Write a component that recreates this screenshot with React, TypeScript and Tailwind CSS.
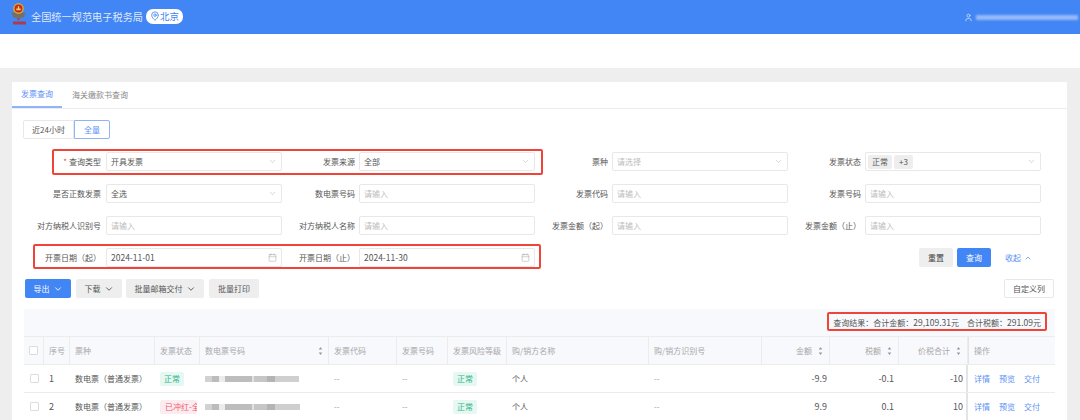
import React from 'react';
import { ChevronDown, ChevronUp, Calendar, MapPin, User } from 'lucide-react';

const font = "font-['Noto_Sans_CJK_SC','Noto_Sans',sans-serif]";

const Logo = () => (
  <svg width="20" height="26" viewBox="0 0 20 26" className="-mt-[4px]">
    <path d="M1.5 10.5 Q8.5 12 15.5 10.5 L14 15 Q8.5 17.5 3 15 Z" fill="#77705f" />
    <circle cx="8.5" cy="6.5" r="5.4" fill="#d9a72c" />
    <circle cx="8.5" cy="6.5" r="3.9" fill="#c8281e" />
    <path d="M6.3 6.4h4.4v1.8H6.3z M7.8 4.2h1.4v2.2H7.8z" fill="#efd06a" />
    <path d="M7 16.5 h3 l-1.5 2z" fill="#c8281e" />
    <rect x="3" y="19.4" width="13" height="3" rx="0.6" fill="#c8281e" opacity="0.8" />
  </svg>
);

const Caret = () => (
  <ChevronDown size={9} strokeWidth={1.5} className="text-[#b5b5b5] shrink-0" />
);

const Field = ({ label, children, req, first }: { label: string; children: React.ReactNode; req?: boolean; first?: boolean }) => (
  <div className="flex items-center h-[19px]">
    <div className={`${first ? 'w-[80px] pr-[5px]' : 'w-[77px] pr-[4px]'} text-right text-[8px] text-[#555] whitespace-nowrap shrink-0`}>
      {req && <span className="text-[#ef4444] mr-[2px]">*</span>}
      {label}
    </div>
    <div className="flex-1 h-full bg-white border border-[#e8e8e8] rounded-[2px] px-[4px] flex items-center justify-between text-[8px] min-w-0">
      {children}
    </div>
  </div>
);

const Value = ({ text }: { text: string }) => <span className="text-[#555]">{text}</span>;
const Hint = ({ text }: { text: string }) => <span className="text-[#bdbdbd]">{text}</span>;

const Sort = () => (
  <svg width="5" height="10" viewBox="0 0 5 10" className="shrink-0">
    <path d="M2.5 1 L4.3 3.4 H0.7 Z M2.5 9 L4.3 6.6 H0.7 Z" fill="#9a9a9a" />
  </svg>
);

const Tag = ({ red }: { red?: boolean }) =>
  red ? (
    <span className="w-[37px] h-[14px] overflow-hidden flex items-center pl-[5px] rounded-[2px] bg-[#fdecef] text-[#ef5a6f] text-[8px] whitespace-nowrap">
      已冲红-全额
    </span>
  ) : (
    <span className="w-[24px] h-[14px] flex items-center justify-center rounded-[2px] bg-[#e6f8f1] text-[#2db487] text-[8px]">
      正常
    </span>
  );

const gridCols = 'grid grid-cols-[20px_26px_85px_45px_129px_68px_51px_59px_142px_113px_68px_69px_69px_87px]';

const heads: { t: string; right?: boolean; sort?: boolean }[] = [
  { t: '序号' },
  { t: '票种' },
  { t: '发票状态' },
  { t: '数电票号码', sort: true },
  { t: '发票代码' },
  { t: '发票号码' },
  { t: '发票风险等级' },
  { t: '购/销方名称' },
  { t: '购/销方识别号' },
  { t: '金额', right: true, sort: true },
  { t: '税额', right: true, sort: true },
  { t: '价税合计', right: true, sort: true },
];

const Check = () => <span className="w-[9px] h-[9px] bg-white border border-[#dcdcdc] rounded-[1px] block" />;

// redacted invoice number, a smear of uneven grey blocks
const Redacted = ({ w }: { w: number }) => (
  <div className="h-[6px] flex blur-[0.7px]" style={{ width: w }}>
    <div className="w-[7px] bg-[#d2d2d2]" />
    <div className="w-[7px] bg-[#bcbcbc]" />
    <div className="w-[6px] bg-[#ececec]" />
    <div className="w-[27px] bg-[#bdbdbd]" />
    <div className="w-[2px] bg-[#e2e2e2]" />
    <div className="w-[13px] bg-[#c6c6c6]" />
    <div className="w-[8px] bg-[#b4b4b4]" />
    <div className="flex-1 bg-[#cfcfcf]" />
  </div>
);

const Row = ({ n, red, a, b, c }: { n: string; red?: boolean; a: string; b: string; c: string }) => (
  <div className={`${gridCols} h-[28px] items-center border-b border-[#ececec] text-[8px] text-[#555]`}>
    <div className="flex justify-center"><Check /></div>
    <div className="pl-[5px] text-[9px]">{n}</div>
    <div className="pl-[5px] whitespace-nowrap">数电票（普通发票）</div>
    <div className="pl-[5px]"><Tag red={red} /></div>
    <div className="pl-[5px]"><Redacted w={red ? 95 : 94} /></div>
    <div className="pl-[5px] text-[#999]">--</div>
    <div className="pl-[5px] text-[#999]">--</div>
    <div className="pl-[5px]"><Tag /></div>
    <div className="pl-[5px]">个人</div>
    <div className="pl-[5px] text-[#999]">--</div>
    <div className="pr-[3px] text-right text-[9px]">{a}</div>
    <div className="pr-[5px] text-right text-[9px]">{b}</div>
    <div className="pr-[3px] text-right text-[9px] border-r-2 border-[#e4e4e4] h-full flex items-center justify-end">{c}</div>
    <div className="pl-[6px] flex gap-[9px] text-[#5b8ff5]">
      <span>详情</span>
      <span>预览</span>
      <span>交付</span>
    </div>
  </div>
);

export default function App() {
  return (
    <div className={`relative w-[1080px] h-[420px] overflow-hidden bg-[#eeeeee] ${font}`}>
      <header className="h-[34px] bg-[#4285f4] flex items-center justify-between pl-[10px] pr-[2px] text-white">
        <div className="flex items-center">
          <Logo />
          <span className="ml-[1px] text-[10.2px] text-[#dfe9fd] whitespace-nowrap">全国统一规范电子税务局</span>
          <span className="ml-[3px] -mt-[2px] h-[15px] w-[37px] rounded-[7px] bg-white text-[#4285f4] text-[9.5px] flex items-center justify-center">
            <MapPin size={10} strokeWidth={2} />
            北京
          </span>
        </div>
        <div className="flex items-center gap-[3px]">
          <User size={9} strokeWidth={2} className="text-[#d5e3ff]" />
          <div className="w-[102px] h-[5px] bg-[#95b9f9] blur-[0.8px]" />
        </div>
      </header>
      <div className="h-[34px] bg-white" />

      <main className="mt-[14px] ml-[12px] w-[1055px] h-[338px] bg-white">
        <div className="h-[27px] flex items-end border-b border-[#ececec] text-[8px]">
          <div className="w-[50px] h-[27px] flex items-center justify-center text-[#5b8ff5] border-b-2 border-[#8fb4f8]">发票查询</div>
          <div className="ml-[10px] h-[26px] flex items-center text-[#888]">海关缴款书查询</div>
        </div>

        <div className="pl-[11px] pt-[11px] flex text-[8px]">
          <div className="w-[51px] h-[19px] flex items-center justify-center border border-[#e8e8e8] rounded-l-[2px] text-[#555]">近24小时</div>
          <div className="w-[36px] h-[19px] flex items-center justify-center border border-[#8fb4f8] rounded-r-[2px] text-[#5b8ff5]">全量</div>
        </div>

        <div className="mt-[13px] ml-[14px] w-[1015px] grid grid-cols-[256px_253px_253px_253px] gap-y-[13px]">
          <Field first label="查询类型" req><Value text="开具发票" /><Caret /></Field>
          <Field label="发票来源"><Value text="全部" /><Caret /></Field>
          <Field label="票种"><Hint text="请选择" /><Caret /></Field>
          <Field label="发票状态">
            <span className="flex gap-[2px] -ml-[2px]">
              <span className="w-[24px] h-[14px] bg-[#eeeeee] rounded-[2px] flex items-center justify-center text-[#555]">正常</span>
              <span className="w-[19px] h-[14px] bg-[#eeeeee] rounded-[2px] flex items-center justify-center text-[#555]">+3</span>
            </span>
            <Caret />
          </Field>

          <Field first label="是否正数发票"><Value text="全选" /><Caret /></Field>
          <Field label="数电票号码"><Hint text="请输入" /></Field>
          <Field label="发票代码"><Hint text="请输入" /></Field>
          <Field label="发票号码"><Hint text="请输入" /></Field>

          <Field first label="对方纳税人识别号"><Hint text="请输入" /></Field>
          <Field label="对方纳税人名称"><Hint text="请输入" /></Field>
          <Field label="发票金额（起）"><Hint text="请输入" /></Field>
          <Field label="发票金额（止）"><Hint text="请输入" /></Field>

          <Field first label="开票日期（起）">
            <span className="text-[8.5px] text-[#555]">2024-11-01</span>
            <Calendar size={9} strokeWidth={1.2} className="text-[#999]" />
          </Field>
          <Field label="开票日期（止）">
            <span className="text-[8.5px] text-[#555]">2024-11-30</span>
            <Calendar size={9} strokeWidth={1.2} className="text-[#999]" />
          </Field>
          <div />
          <div className="flex items-center justify-end pr-[9px] text-[8px]">
            <div className="w-[34px] h-[19px] bg-[#eeeeee] rounded-[2px] flex items-center justify-center text-[#444] mr-[4px]">重置</div>
            <div className="w-[34px] h-[19px] bg-[#4285f4] rounded-[2px] flex items-center justify-center text-white mr-[14px]">查询</div>
            <div className="w-[27px] flex items-center gap-[3px] text-[#5b8ff5] whitespace-nowrap">
              收起
              <ChevronUp size={10} strokeWidth={2.2} />
            </div>
          </div>
        </div>

        <div className="mt-[12px] pl-[13px] pr-[13px] flex items-center text-[8px] h-[19px]">
          <div className="w-[46px] h-[19px] bg-[#4285f4] rounded-[2px] text-white flex items-center justify-center gap-[3px]">
            导出 <ChevronDown size={10} strokeWidth={2.2} />
          </div>
          <div className="ml-[5px] w-[46px] h-[19px] bg-[#eeeeee] rounded-[2px] text-[#555] flex items-center justify-center gap-[3px]">
            下载 <ChevronDown size={10} strokeWidth={2.2} />
          </div>
          <div className="ml-[4px] w-[78px] h-[19px] bg-[#eeeeee] rounded-[2px] text-[#555] flex items-center justify-center gap-[3px]">
            批量邮箱交付 <ChevronDown size={10} strokeWidth={2.2} />
          </div>
          <div className="ml-[5px] w-[50px] h-[19px] bg-[#eeeeee] rounded-[2px] text-[#555] flex items-center justify-center">批量打印</div>
          <div className="ml-auto w-[50px] h-[19px] border border-[#e8e8e8] rounded-[2px] text-[#555] flex items-center justify-center">自定义列</div>
        </div>

        <div className="mt-[11px] ml-[12px] w-[1031px]">
          <div className="h-[28px] bg-[#f8f9fd] border-b border-[#ececec] flex items-center justify-end pr-[14px] text-[8px] text-[#555] whitespace-nowrap">
            查询结果：合计金额：<span className="text-[8.5px]">29,109.31</span>元
            <span className="ml-[8px]">合计税额：</span><span className="text-[8.5px]">291.09</span>元
          </div>
          <div className={`${gridCols} h-[28px] bg-[#f8f9fd] border-b border-[#ececec] text-[8px] text-[#a8a8a8]`}>
            <div className="flex items-center justify-center border-r border-[#ececec]"><Check /></div>
            {heads.map((h) => (
              <div
                key={h.t}
                className={`flex items-center gap-[6px] px-[5px] border-r border-[#ececec] whitespace-nowrap overflow-hidden ${h.sort ? 'justify-between' : ''} ${h.right ? '!justify-end !pr-[6px]' : ''}`}
              >
                {h.t}
                {h.sort && <Sort />}
              </div>
            ))}
            <div className="flex items-center pl-[5px] border-l border-[#e4e4e4]">操作</div>
          </div>
          <Row n="1" a="-9.9" b="-0.1" c="-10" />
          <Row n="2" red a="9.9" b="0.1" c="10" />
        </div>
      </main>

      {/* red annotation boxes drawn over the screenshot */}
      <div className="absolute left-[52px] top-[149px] w-[491px] h-[26px] border-2 border-[#f04438] rounded-[2px]" />
      <div className="absolute left-[33px] top-[244px] w-[508px] h-[25px] border-2 border-[#f04438] rounded-[2px]" />
      <div className="absolute left-[827px] top-[312px] w-[220px] h-[19px] border-2 border-[#f04438] rounded-[2px]" />
    </div>
  );
}
